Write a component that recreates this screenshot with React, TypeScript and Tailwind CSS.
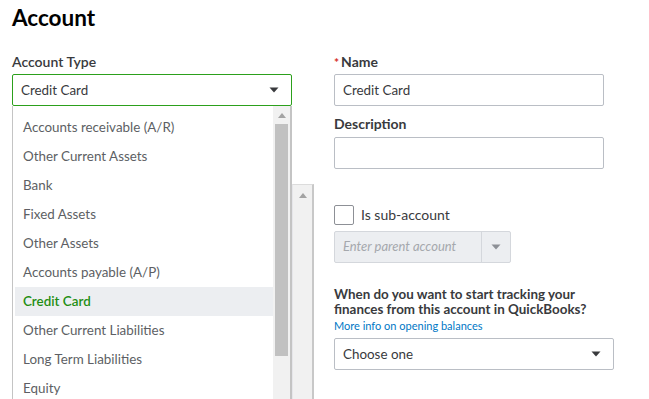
import { Fragment } from 'react';

const accountTypes = [
  'Accounts receivable (A/R)',
  'Other Current Assets',
  'Bank',
  'Fixed Assets',
  'Other Assets',
  'Accounts payable (A/P)',
  'Credit Card',
  'Other Current Liabilities',
  'Long Term Liabilities',
  'Equity',
];

function Caret({ className = 'text-[#393a3d]' }: { className?: string }) {
  return (
    <svg width="10" height="6" viewBox="0 0 10 6" className={className}>
      <path d="M0.5 0.5 L9.5 0.5 L5 5.5 Z" fill="currentColor" />
    </svg>
  );
}

function UpArrow() {
  return (
    <svg width="8" height="5" viewBox="0 0 8 5">
      <path d="M0 5 L8 5 L4 0 Z" fill="#a3a3a3" />
    </svg>
  );
}

export default function App() {
  return (
    <div className="relative w-[649px] h-[399px] overflow-hidden bg-white text-[#393a3d] font-['Lato','Noto_Sans',sans-serif]">
      {/* scrollbar of the panel behind the menu */}
      <div className="absolute left-[292px] top-[184px] w-[22px] h-[230px] bg-[#f1f1f1] border-l border-[#e6e6ea] border-r-2 border-r-[#c8c8c8] border-t border-t-[#dcdcdc] flex justify-center pt-[8px]">
        <UpArrow />
      </div>

      <div className="relative px-3 pt-[3px]">
        <h1 className="text-[22.5px] font-bold leading-[30px] text-[#000]">Account</h1>

        <div className="flex items-start gap-[42px] mt-[19px]">
          {/* Left column */}
          <div className="relative w-[280px]">
            <div className="h-[20px] text-[14px] font-semibold leading-[20px] mb-[2px]">Account Type</div>
            <div className="h-[32px] border border-[#2ca01c] rounded-[2px] flex items-center justify-between pl-[8px] pr-[12px] text-[13.4px]">
              <span>Credit Card</span>
              <Caret />
            </div>

            {/* open menu */}
            <div className="absolute left-0 top-full w-[280px] h-[320px] bg-white border-l border-r-2 border-[#c4c4c4] flex">
              <ul className="flex-1 pl-[2px] pt-[7px]">
                {accountTypes.map((t) => (
                  <Fragment key={t}>
                    <li
                      className={`h-[29px] flex items-center pl-[8px] text-[13.4px] ${
                        t === 'Credit Card'
                          ? 'bg-[#eceef1] text-[#1f8e13] font-semibold'
                          : 'text-[#5d5f64]'
                      }`}
                    >
                      {t}
                    </li>
                  </Fragment>
                ))}
              </ul>
              <div className="w-[17px] bg-[#f1f1f1] flex flex-col items-center">
                <div className="h-[18px] flex items-center">
                  <UpArrow />
                </div>
                <div className="w-[13px] h-[232px] bg-[#c1c1c1]" />
              </div>
            </div>
          </div>

          {/* Right column */}
          <div className="w-[280px]">
            <div className="h-[20px] text-[14px] font-bold leading-[20px] mb-[2px] flex items-baseline">
              <span className="text-[#d52b1e] text-[12px] leading-[20px] mr-[2px]">*</span>
              Name
            </div>
            <div className="w-[270px] h-[32px] border border-[#babec5] rounded-[2px] flex items-center pl-[8px] text-[13.4px]">
              Credit Card
            </div>

            <div className="h-[20px] text-[14px] font-bold leading-[20px] mt-[8px] mb-[3px]">Description</div>
            <div className="w-[270px] h-[32px] border border-[#babec5] rounded-[2px]" />

            <label className="flex items-center gap-[7px] mt-[35px] text-[14px]">
              <span className="w-[20px] h-[20px] border border-[#8d9096] rounded-[2px] bg-white" />
              Is sub-account
            </label>

            <div className="w-[177px] h-[32px] mt-[6px] bg-[#eceef1] border border-[#d4d7dc] rounded-[2px] flex">
              <div className="flex-1 flex items-center pl-[8px] text-[13px] italic text-[#a5a8ad]">
                Enter parent account
              </div>
              <div className="w-[29px] border-l border-[#d4d7dc] flex items-center justify-center">
                <Caret className="text-[#8d9096]" />
              </div>
            </div>

            <div className="mt-[24px] text-[13.4px] font-bold leading-[15px] text-[#393a3d]">
              When do you want to start tracking your
              <br />
              finances from this account in QuickBooks?
            </div>
            <a className="block mt-[3px] text-[11px] leading-[12px] text-[#0077c5]">
              More info on opening balances
            </a>
            <div className="w-[280px] h-[32px] mt-[6px] border border-[#babec5] rounded-[2px] flex items-center justify-between pl-[8px] pr-[12px] text-[13.4px]">
              <span>Choose one</span>
              <Caret />
            </div>
          </div>
        </div>
      </div>
    </div>
  );
}
